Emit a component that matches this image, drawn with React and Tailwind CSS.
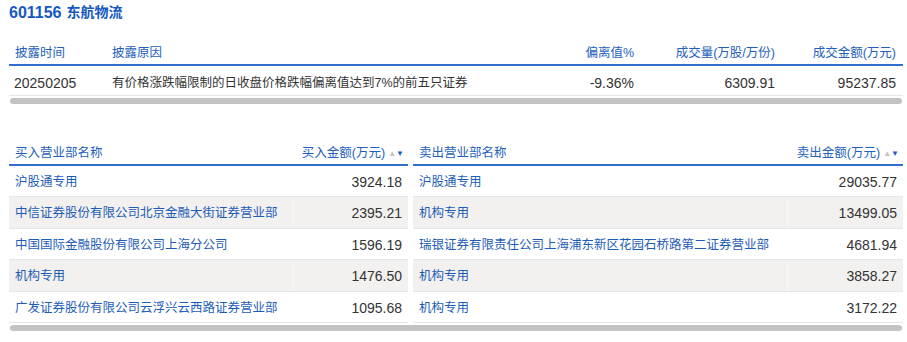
import React from "react";

const FONT = "font-['Liberation_Sans','Noto_Sans_CJK_SC',sans-serif]";

const buys = [
  ["沪股通专用", "3924.18"],
  ["中信证券股份有限公司北京金融大街证券营业部", "2395.21"],
  ["中国国际金融股份有限公司上海分公司", "1596.19"],
  ["机构专用", "1476.50"],
  ["广发证券股份有限公司云浮兴云西路证券营业部", "1095.68"],
];

const sells = [
  ["沪股通专用", "29035.77"],
  ["机构专用", "13499.05"],
  ["瑞银证券有限责任公司上海浦东新区花园石桥路第二证券营业部", "4681.94"],
  ["机构专用", "3858.27"],
  ["机构专用", "3172.22"],
];

function SortArrows() {
  return (
    <span className="ml-[3px] inline-flex items-center text-[8px] leading-none">
      <span className="text-[#c4c4c4]">▲</span>
      <span className="text-[#2360bb]">▼</span>
    </span>
  );
}

function Scrollbar() {
  return (
    <div className="h-[10px] pt-[2px] pl-[1px] pr-[1px]">
      <div className="h-[6px] rounded-full bg-[#c3c3c3]" />
    </div>
  );
}

function SideTable({ title, amountTitle, rows, nameW }) {
  return (
    <div className="flex-1">
      <div className="flex h-[25px] items-center border-b-2 border-[#2f6fcc] pt-[2px] text-[12.5px] text-[#2360bb]">
        <div className="pl-[6px]" style={{ width: nameW }}>
          {title}
        </div>
        <div className="flex flex-1 items-center justify-end pr-[4px]">
          {amountTitle}
          <SortArrows />
        </div>
      </div>
      {rows.map(([name, amt], i) => {
        const odd = i % 2 === 1;
        return (
          <div
            key={i}
            className={`flex items-center border-b border-[#e6e6e6] pt-[2px] ${
              odd ? "h-[32px] bg-[#f2f1f0]" : "h-[31px] bg-white"
            }`}
          >
            <div
              className="flex h-full items-center pl-[6px] text-[12.5px] text-[#1d5cb6] whitespace-nowrap"
              style={{ width: nameW }}
            >
              {name}
            </div>
            <div
              className={`flex h-full flex-1 items-center justify-end border-l pr-[6px] text-[14px] text-[#333333] ${
                odd ? "border-[#f8f8f8]" : "border-transparent"
              }`}
            >
              {amt}
            </div>
          </div>
        );
      })}
    </div>
  );
}

export default function App() {
  return (
    <div className={`${FONT} h-[342px] w-[907px] overflow-hidden bg-white pl-[9px] pr-[4px]`}>
      <div className="flex h-[24px] items-center pt-[1px] font-bold text-[#1558c0]">
        <span className="text-[16px]">601156</span>
        <span className="ml-[5px] text-[14px]">东航物流</span>
      </div>

      <div className="mt-[17px]">
        <div className="flex h-[25px] items-center border-b-2 border-[#2f6fcc] pt-[2px] text-[12.5px] text-[#2360bb]">
          <div className="w-[97px] pl-[6px]">披露时间</div>
          <div className="flex-1 pl-[6px]">披露原因</div>
          <div className="w-[120px] pr-[6px] text-right">偏离值%</div>
          <div className="w-[141px] pr-[6px] text-right">成交量(万股/万份)</div>
          <div className="w-[122px] pr-[7px] text-right">成交金额(万元)</div>
        </div>
        <div className="flex h-[30px] items-center border-b border-[#e6e6e6] pt-[5px] text-[#333333]">
          <div className="w-[97px] pl-[5px] text-[14px]">20250205</div>
          <div className="flex-1 pl-[6px] text-[12.5px]">
            有价格涨跌幅限制的日收盘价格跌幅偏离值达到7%的前五只证券
          </div>
          <div className="w-[120px] pr-[6px] text-right text-[14px]">-9.36%</div>
          <div className="w-[141px] pr-[6px] text-right text-[14px]">6309.91</div>
          <div className="w-[122px] pr-[7px] text-right text-[14px]">95237.85</div>
        </div>
        <Scrollbar />
      </div>

      <div className="mt-[35px]">
        <div className="flex gap-[5px]">
          <div className="w-[399px] flex-none">
            <SideTable title="买入营业部名称" amountTitle="买入金额(万元)" rows={buys} nameW={284} />
          </div>
          <div className="flex-1">
            <SideTable title="卖出营业部名称" amountTitle="卖出金额(万元)" rows={sells} nameW={374} />
          </div>
        </div>
        <Scrollbar />
      </div>
    </div>
  );
}
